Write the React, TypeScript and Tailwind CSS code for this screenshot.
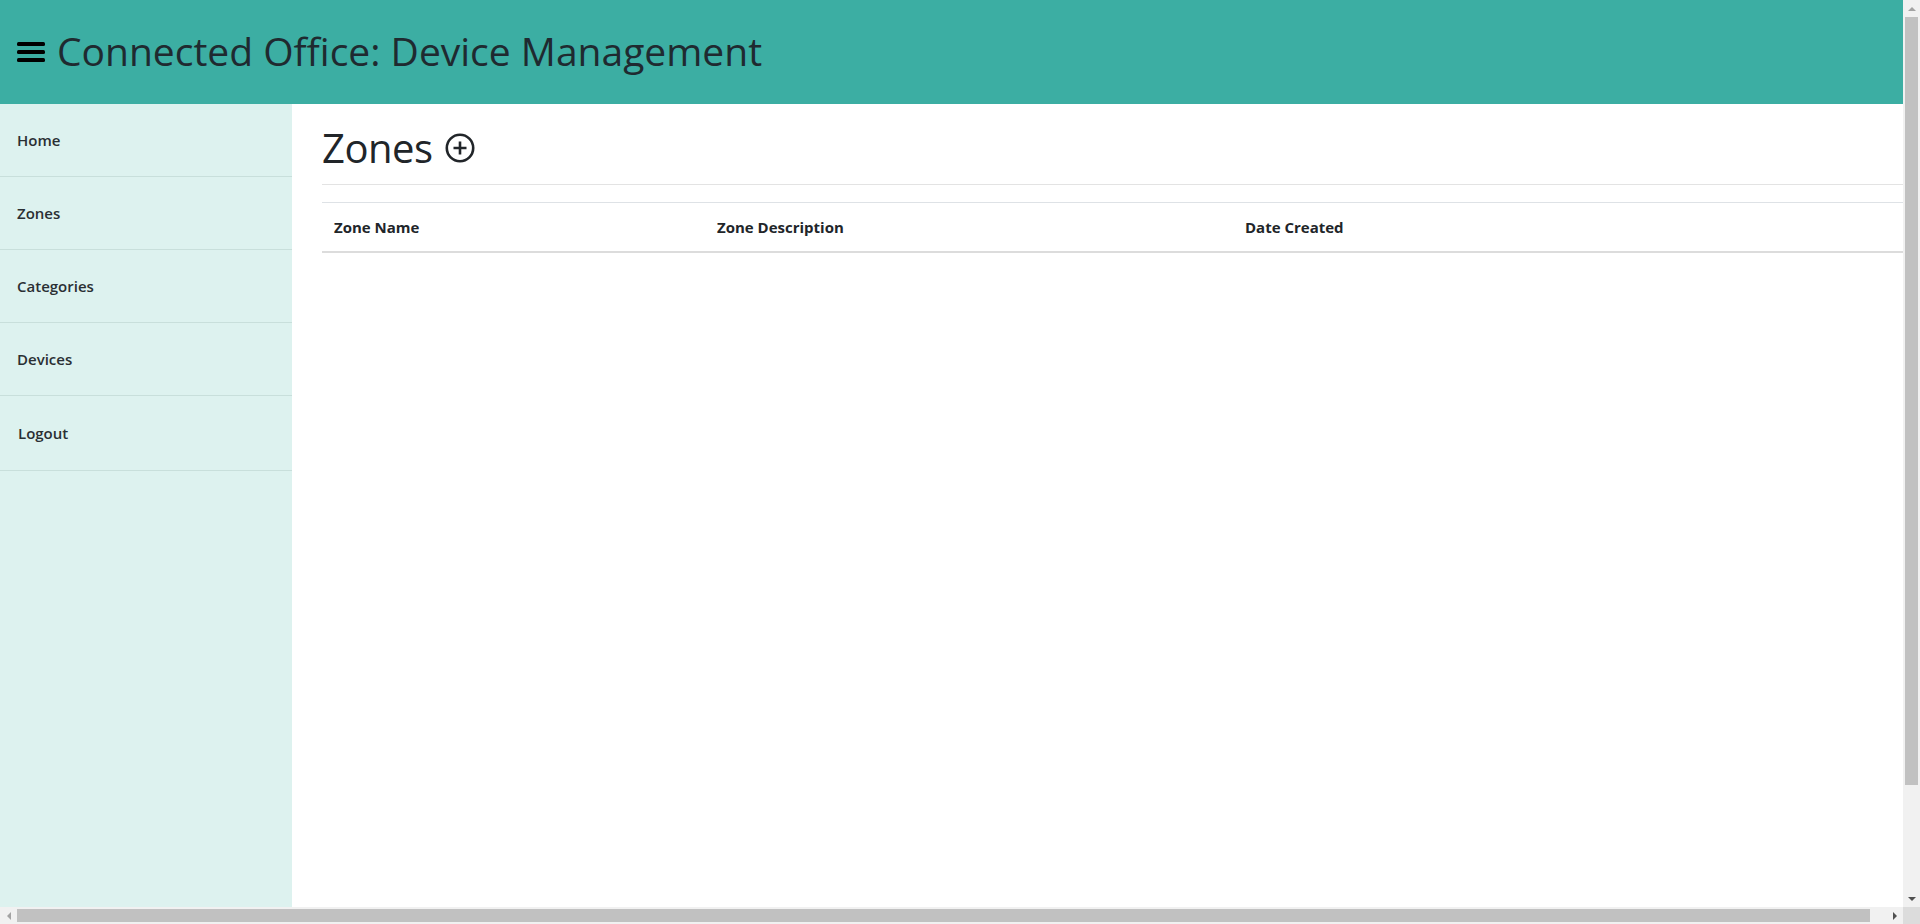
import React from "react";

const navItems = ["Home", "Zones", "Categories", "Devices"];

const BarsIcon = () => (
  <svg width="28" height="20" viewBox="0 0 28 20" className="shrink-0">
    <rect x="0" y="0" width="28" height="4" rx="1.5" fill="#000" />
    <rect x="0" y="8" width="28" height="4" rx="1.5" fill="#000" />
    <rect x="0" y="16" width="28" height="4" rx="1.5" fill="#000" />
  </svg>
);

const PlusCircle = () => (
  <svg width="30" height="30" viewBox="0 0 30 30" className="shrink-0">
    <circle cx="15" cy="15" r="13.2" fill="none" stroke="#212529" strokeWidth="2.6" />
    <path d="M15 8.5v13M8.5 15h13" stroke="#212529" strokeWidth="2.6" />
  </svg>
);

const VScrollbar = () => (
  <div className="w-[17px] bg-[#f1f1f1] flex flex-col items-center">
    <div className="h-[17px] flex items-center justify-center">
      <div className="w-0 h-0 border-l-[4px] border-r-[4px] border-b-[4px] border-l-transparent border-r-transparent border-b-[#a3a3a3]" />
    </div>
    <div className="w-[13px] h-[768px] bg-[#c1c1c1]" />
    <div className="flex-1" />
    <div className="h-[17px] flex items-center justify-center">
      <div className="w-0 h-0 border-l-[4px] border-r-[4px] border-t-[4px] border-l-transparent border-r-transparent border-t-[#505050]" />
    </div>
  </div>
);

const HScrollbar = () => (
  <div className="h-[17px] flex bg-[#f1f1f1] shrink-0">
    <div className="w-[17px] flex items-center justify-center">
      <div className="w-0 h-0 border-t-[4px] border-b-[4px] border-r-[4px] border-t-transparent border-b-transparent border-r-[#a3a3a3]" />
    </div>
    <div className="flex-1 flex items-center pr-[16px]">
      <div className="h-[13px] w-full bg-[#c1c1c1]" />
    </div>
    <div className="w-[17px] flex items-center justify-center">
      <div className="w-0 h-0 border-t-[4px] border-b-[4px] border-l-[4px] border-t-transparent border-b-transparent border-l-[#505050]" />
    </div>
    <div className="w-[17px] bg-[#dcdcdc]" />
  </div>
);

const App = () => {
  return (
    <div className="h-screen w-screen flex flex-col overflow-hidden bg-white text-[#212529] font-['Open_Sans','Noto_Sans',sans-serif]">
      <div className="flex flex-1 min-h-0">
        <div className="flex-1 flex flex-col min-w-0">
          <header className="h-[104px] shrink-0 bg-[#3caea3] flex items-center pl-[17px] gap-[12px]">
            <BarsIcon />
            <h1 className="text-[39px] font-medium leading-[1.2] text-[#1f2a30] pb-[2px]">
              Connected Office: Device Management
            </h1>
          </header>
          <div className="flex flex-1 min-h-0">
            <nav className="w-[292px] shrink-0 bg-[#ddf2ef]">
              {navItems.map((item) => (
                <div
                  key={item}
                  className="h-[73px] flex items-center pl-[17px] border-b border-[#c8dfdb] text-[15px] font-semibold text-[#2a2f33]"
                >
                  {item}
                </div>
              ))}
              <div className="h-[75px] flex items-center pl-[18px] border-b border-[#c8dfdb] text-[15px] font-semibold text-[#2a2f33]">
                Logout
              </div>
            </nav>
            <main className="flex-1 pl-[30px] pt-[20px] min-w-0">
              <div className="flex items-center gap-[12px]">
                <h2 className="text-[40px] font-medium leading-[1.2] tracking-[-0.5px]">Zones</h2>
                <PlusCircle />
              </div>
              <hr className="mt-[12px] border-0 border-t border-[#e3e3e3]" />
              <table className="mt-[17px] w-full border-collapse text-left">
                <thead>
                  <tr className="border-t border-b-2 border-t-[#dee2e6] border-b-[#dcdcdc]">
                    <th className="w-[383px] px-[12px] py-[12px] text-[15px] font-bold leading-[24px]">Zone Name</th>
                    <th className="w-[528px] px-[12px] py-[12px] text-[15px] font-bold leading-[24px]">Zone Description</th>
                    <th className="px-[12px] py-[12px] text-[15px] font-bold leading-[24px]">Date Created</th>
                  </tr>
                </thead>
                <tbody />
              </table>
            </main>
          </div>
        </div>
        <VScrollbar />
      </div>
      <HScrollbar />
    </div>
  );
};

export default App;
